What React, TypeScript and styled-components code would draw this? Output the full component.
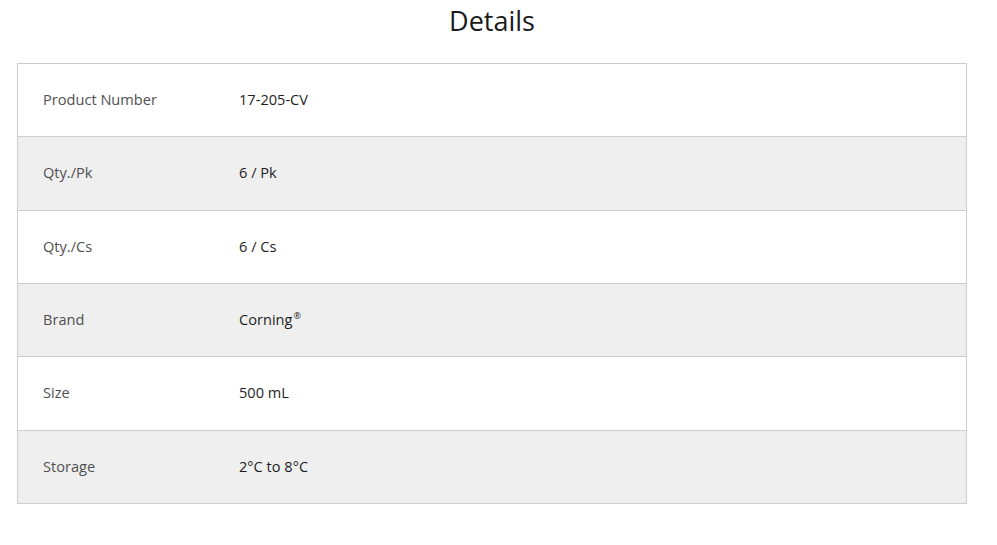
import React from "react";
import styled, { createGlobalStyle } from "styled-components";

const Global = createGlobalStyle`
  html, body { margin: 0; padding: 0; background: #fff; }
  body { font-family: "Open Sans", "Noto Sans", Arial, sans-serif; }
`;

const Page = styled.div`
  width: 997px;
  padding: 0 30px 0 17px;
  box-sizing: border-box;
`;

const Title = styled.h2`
  margin: 0;
  height: 63px;
  padding-top: 4px;
  box-sizing: border-box;
  text-align: center;
  font-size: 27px;
  font-weight: 400;
  color: #1a1a1a;
  line-height: 34px;
`;

const Table = styled.div`
  border: 1px solid #cccccc;
  border-bottom: none;
`;

const Row = styled.div<{ $alt: boolean }>`
  display: grid;
  grid-template-columns: 196px 1fr;
  align-items: center;
  height: 73.33px;
  box-sizing: border-box;
  padding-left: 25px;
  padding-bottom: 2px;
  border-bottom: 1px solid #cccccc;
  background: ${(p) => (p.$alt ? "#efefef" : "#ffffff")};
  font-size: 14.6px;
`;

const Label = styled.span`
  color: #505050;
`;

const Value = styled.span`
  color: #1e1e1e;
`;

const Reg = styled.sup`
  font-size: 9px;
  vertical-align: 6px;
  line-height: 0;
  margin-left: 1px;
`;

const rows: [string, React.ReactNode][] = [
  ["Product Number", "17-205-CV"],
  ["Qty./Pk", "6 / Pk"],
  ["Qty./Cs", "6 / Cs"],
  ["Brand", <>Corning<Reg>®</Reg></>],
  ["Size", "500 mL"],
  ["Storage", "2°C to 8°C"],
];

export default function App() {
  return (
    <Page>
      <Global />
      <Title>Details</Title>
      <Table>
        {rows.map(([l, v], i) => (
          <Row key={l} $alt={i % 2 === 1}>
            <Label>{l}</Label>
            <Value>{v}</Value>
          </Row>
        ))}
      </Table>
    </Page>
  );
}
